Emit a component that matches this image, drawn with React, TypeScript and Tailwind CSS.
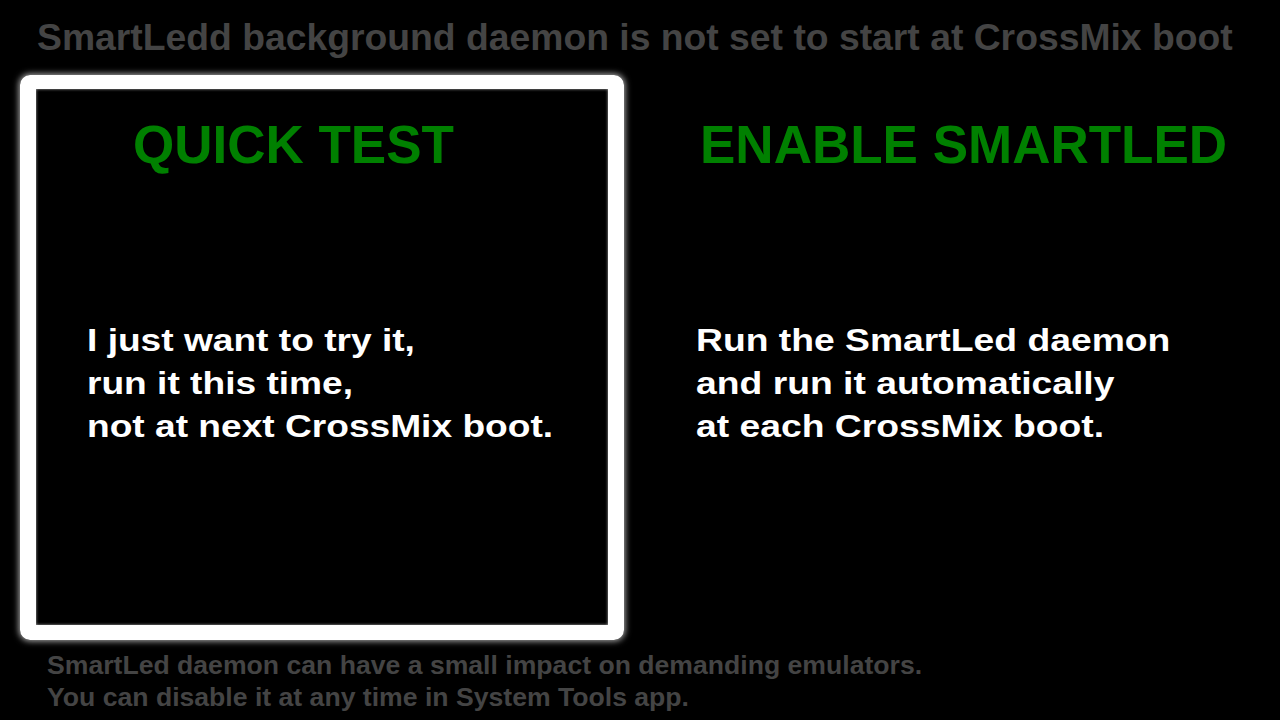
export default function App() {
  const font = { fontFamily: '"Liberation Sans", Arial, sans-serif' };

  return (
    <div
      className="w-[1280px] h-[720px] bg-black overflow-hidden flex flex-col font-bold"
      style={font}
    >
      <div className="pt-[20px] pl-[37px] text-[36px] leading-[36px] text-[#444444] whitespace-nowrap">
        <div className="origin-left scale-x-[1.036]">
          SmartLedd background daemon is not set to start at CrossMix boot
        </div>
      </div>

      <div className="mt-[19px] flex pl-[20px] gap-[32px]">
        <div className="w-[604px] h-[565px] rounded-[10px] border-white border-t-[14px] border-x-[16px] border-b-[15px] shadow-[0_0_6px_1px_rgba(255,255,255,0.7),inset_0_0_3px_rgba(255,255,255,0.7)] flex flex-col">
          <div className="pt-[29px] pl-[97px] text-[53px] leading-[53px] text-[#008000] whitespace-nowrap">
            QUICK TEST
          </div>
          <div className="mt-[148px] pl-[51px] text-[32px] leading-[43px] text-white whitespace-nowrap">
            <div className="origin-left scale-x-[1.16]">
              I just want to try it,
              <br />
              run it this time,
              <br />
              not at next CrossMix boot.
            </div>
          </div>
        </div>

        <div className="w-[604px] h-[565px] flex flex-col">
          <div className="pt-[43px] pl-[44px] text-[53px] leading-[53px] text-[#008000] whitespace-nowrap">
            ENABLE SMARTLED
          </div>
          <div className="mt-[148px] pl-[40px] text-[32px] leading-[43px] text-white whitespace-nowrap">
            <div className="origin-left scale-x-[1.165]">
              Run the SmartLed daemon
              <br />
              and run it automatically
              <br />
              at each CrossMix boot.
            </div>
          </div>
        </div>
      </div>

      <div className="mt-[9px] pl-[47px] text-[25px] leading-[32px] text-[#444444] whitespace-nowrap">
        <div className="origin-left scale-x-[1.064]">
          SmartLed daemon can have a small impact on demanding emulators.
          <br />
          You can disable it at any time in System Tools app.
        </div>
      </div>
    </div>
  );
}
